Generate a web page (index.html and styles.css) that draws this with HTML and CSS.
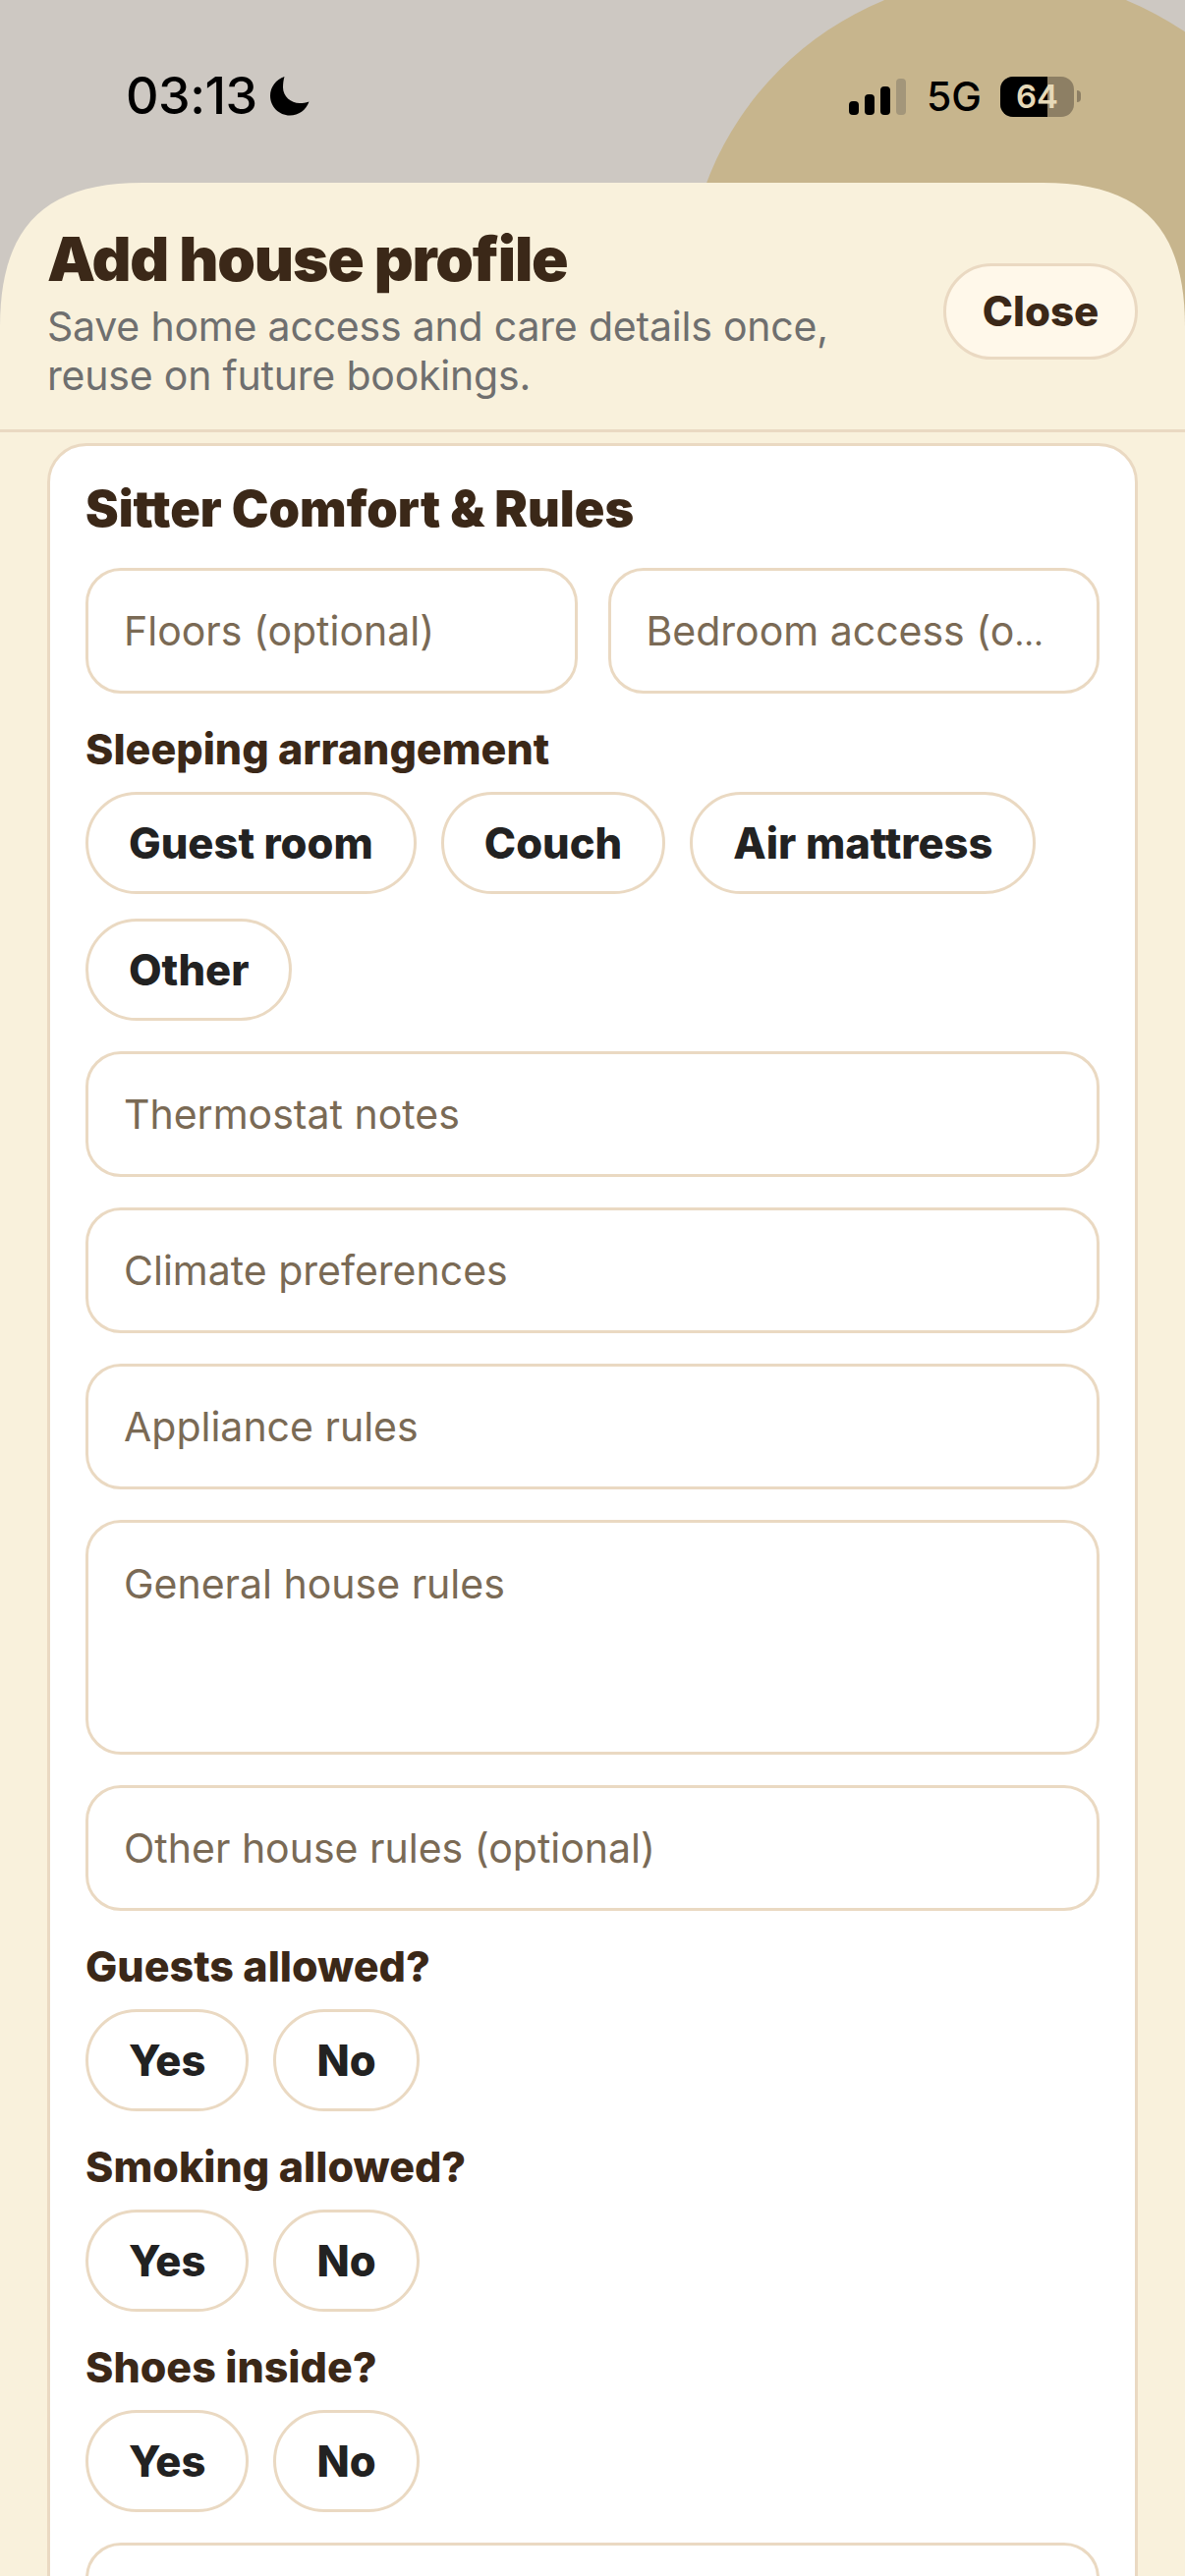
FILE: index.html
```html
<!DOCTYPE html>
<html lang="en">
<head>
<meta charset="utf-8">
<title>Add house profile</title>
<link rel="stylesheet" href="styles.css">
</head>
<body>
<div class="screen">
  <div class="backdrop">
    <div class="blob"></div>
    <div class="status">
      <div class="status-left">
        <span class="time">03:13</span>
        <svg class="moon" viewBox="0 0 40 40"><path d="M14.500 0C6 3 0 10.500 0 19.500C0 30.500 9 39.500 20 39.500C29 39.500 36.500 34 39.500 25.500C36 27 33 27 30 27C21 27 13 20 13 11C13 7 13.500 3 14.500 0Z"/></svg>
      </div>
      <div class="status-right">
        <svg class="signal" viewBox="0 0 58 37"><rect x="0" y="23" width="10" height="14" rx="4"/><rect x="16" y="16" width="10" height="21" rx="4"/><rect x="32" y="8" width="10" height="29" rx="4"/><rect class="dim" x="48" y="0" width="10" height="37" rx="4"/></svg>
        <span class="net">5G</span>
        <div class="battery">
          <div class="cell"><div class="fill"></div><span class="pct">64</span></div>
          <div class="nub"></div>
        </div>
      </div>
    </div>
  </div>
  <main class="sheet">
    <header class="head">
      <div class="head-text">
        <h1 class="title">Add house profile</h1>
        <p class="sub">Save home access and care details once, reuse on future bookings.</p>
      </div>
      <button class="close">Close</button>
    </header>
    <section class="card">
      <h2 class="card-title">Sitter Comfort &amp; Rules</h2>
      <div class="pair">
        <div class="field"><span class="ph">Floors (optional)</span></div>
        <div class="field"><span class="ph">Bedroom access (o<span class="ell">…</span></span></div>
      </div>
      <h3 class="label">Sleeping arrangement</h3>
      <div class="chips">
        <button class="chip">Guest room</button>
        <button class="chip">Couch</button>
        <button class="chip">Air mattress</button>
        <button class="chip">Other</button>
      </div>
      <div class="field"><span class="ph">Thermostat notes</span></div>
      <div class="field"><span class="ph">Climate preferences</span></div>
      <div class="field"><span class="ph">Appliance rules</span></div>
      <div class="field area"><span class="ph">General house rules</span></div>
      <div class="field"><span class="ph">Other house rules (optional)</span></div>
      <h3 class="label">Guests allowed?</h3>
      <div class="chips">
        <button class="chip">Yes</button>
        <button class="chip">No</button>
      </div>
      <h3 class="label">Smoking allowed?</h3>
      <div class="chips">
        <button class="chip">Yes</button>
        <button class="chip">No</button>
      </div>
      <h3 class="label">Shoes inside?</h3>
      <div class="chips">
        <button class="chip">Yes</button>
        <button class="chip">No</button>
      </div>
      <div class="field"></div>
    </section>
  </main>
</div>
</body>
</html>
```

FILE: styles.css
```css
* { box-sizing: border-box; }
html, body { margin: 0; padding: 0; }
body { width: 1206px; height: 2622px; overflow: hidden; font-family: Inter, "Liberation Sans", sans-serif; background: #cdc8c2; }
.screen { width: 1206px; height: 2622px; overflow: hidden; position: relative; }

.backdrop { height: 340px; margin-bottom: -154px; position: relative; background: #cdc8c2; overflow: hidden; }
.blob { position: absolute; left: 698px; top: -24px; width: 650px; height: 650px; border-radius: 50%; background: #c7b58d; }
.status { position: relative; display: flex; justify-content: space-between; align-items: center; padding: 68px 106px 0 128px; }
.status-left { display: flex; align-items: center; gap: 13px; }
.time { font-size: 52px; line-height: 60px; font-weight: 550; color: #000; letter-spacing: -0.5px; }
.moon { width: 40px; height: 40px; fill: #000; }
.status-right { display: flex; align-items: center; }
.signal { width: 58px; height: 37px; fill: #000; margin-right: 21px; }
.signal .dim { fill: #a3967a; }
.net { font-size: 41px; line-height: 48px; font-weight: 500; color: #000; margin-right: 19px; }
.battery { display: flex; align-items: center; }
.cell { position: relative; width: 75px; height: 41px; border-radius: 13px; background: #8d7f64; overflow: hidden; display: flex; align-items: center; justify-content: center; }
.fill { position: absolute; left: 0; top: 0; bottom: 0; width: 48px; background: #000; }
.pct { position: relative; font-size: 33px; line-height: 41px; font-weight: 600; color: #e6d9b8; }
.nub { width: 4px; height: 12px; margin-left: 3px; border-radius: 0 4px 4px 0; background: #8d7f64; }

.sheet { position: relative; height: 2436px; background: #f9f1dc; clip-path: path("M0 147C0 45 45 0 145 0L1061 0C1161 0 1206 45 1206 147L1206 2436L0 2436Z"); overflow: hidden; }
.head { height: 254px; display: flex; align-items: flex-start; justify-content: space-between; padding: 42px 48px 0 48px; border-bottom: 3px solid #ead9c2; }
.head-text { width: 860px; }
.title { margin: 0; font-size: 62px; line-height: 72px; font-weight: 900; letter-spacing: -1.2px; color: #3b2818; }
.sub { margin: 7px 0 0; font-size: 41px; line-height: 50px; font-weight: 400; letter-spacing: -0.2px; color: #6f6f6f; }
.close { margin-top: 40px; width: 198px; height: 98px; border: 3px solid #ead9c2; border-radius: 49px; background: #fff8ea; color: #3b2818; font: 800 42px/1 Inter, sans-serif; padding: 0; }

.card { margin: 11px 48px 0; padding: 35px 36px 0; background: #fff; border: 3px solid #ead9c2; border-radius: 40px; height: 2300px; }
.card-title { margin: 0 0 31px; font-size: 50.500px; line-height: 58px; font-weight: 900; color: #3b2818; }
.pair { display: grid; grid-template-columns: 1fr 1fr; gap: 31px; }
.field { height: 128px; margin-bottom: 31px; padding: 0 36px; border: 3px solid #ead9c2; border-radius: 36px; background: #fff; display: flex; align-items: center; overflow: hidden; }
.field.area { height: 239px; align-items: flex-start; padding-top: 37px; }
.ph { font-size: 41px; line-height: 50px; color: #7a6a55; white-space: nowrap; }
.ell { font-size: 34px; line-height: 1; }
.label { margin: 0 0 19px; font-size: 43px; line-height: 50px; font-weight: 800; color: #3b2818; }
.chips { display: flex; flex-wrap: wrap; gap: 25px; margin-bottom: 31px; }
.chip { height: 104px; padding: 2px 41px 0; border: 3px solid #ead9c2; border-radius: 52px; background: #fff; color: #222; font: 800 43.500px/1 Inter, sans-serif; }
```
